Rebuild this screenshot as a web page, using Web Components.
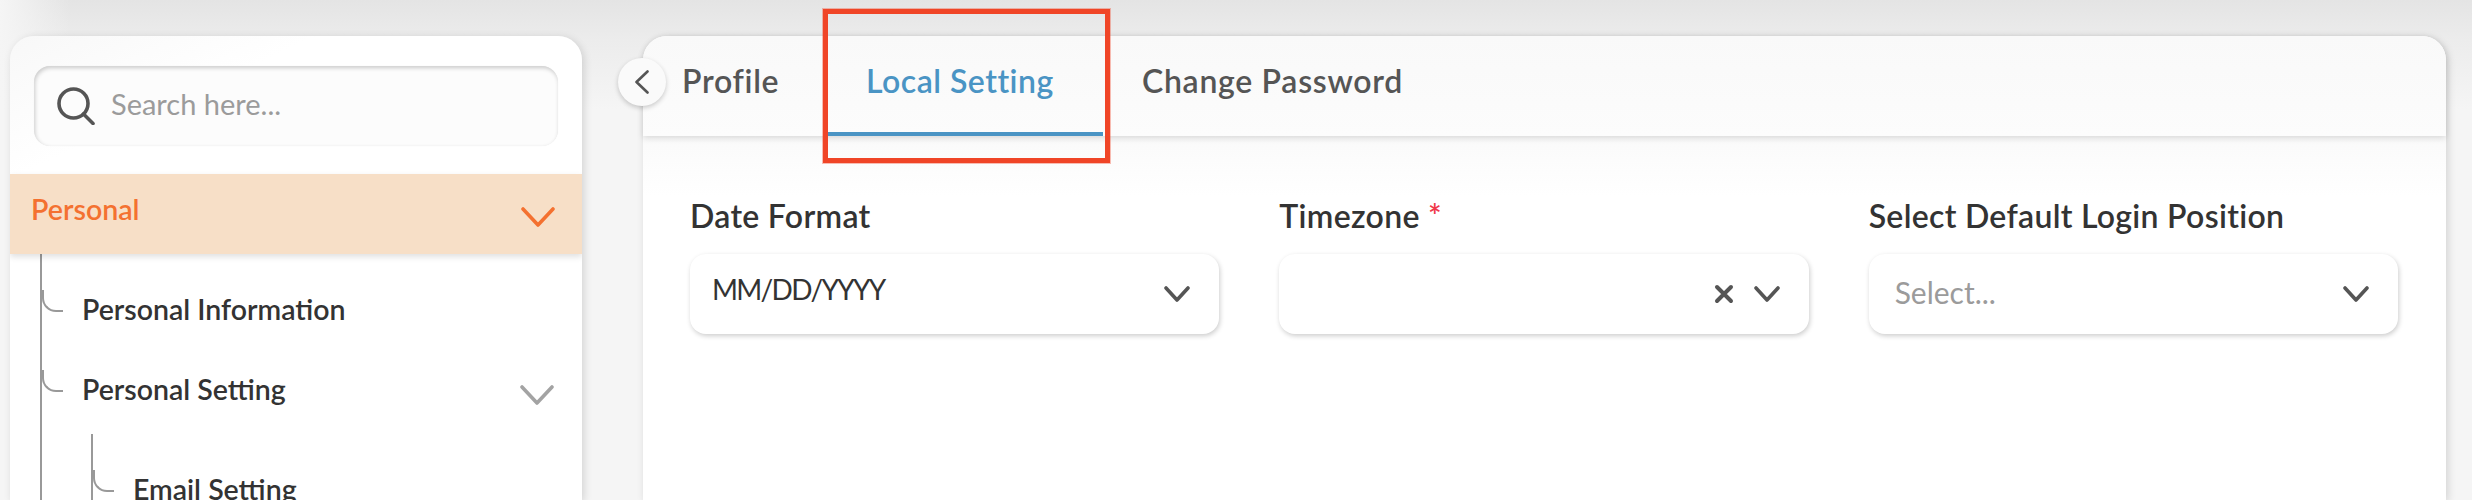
<!DOCTYPE html>
<html>
<head>
<meta charset="utf-8">
<title>Local Setting</title>
<style>
  html, body { margin: 0; height: 100%; overflow: hidden; }
  body {
    position: relative;
    background:
      linear-gradient(90deg, #f5f5f5 0, rgba(245, 245, 245, 0) 70px),
      linear-gradient(180deg, #e4e4e4 0, #ececec 40px, #f5f5f5 110px);
    font-family: Lato, "Open Sans", sans-serif;
    color: #333;
  }
  .layout { display: flex; gap: 61px; padding: 36px 26px 0 10px; height: 100%; box-sizing: border-box; overflow: hidden; }
</style>
</head>
<body>
<div class="layout">
  <side-nav>
    <search-box placeholder="Search here..."></search-box>
    <nav-group label="Personal"></nav-group>
    <nav-tree>
      <nav-leaf>Personal Information</nav-leaf>
      <nav-leaf chevron>Personal Setting</nav-leaf>
      <nav-tree nested>
        <nav-leaf>Email Setting</nav-leaf>
      </nav-tree>
    </nav-tree>
  </side-nav>
  <settings-panel>
    <tab-item slot="tabs">Profile</tab-item>
    <tab-item slot="tabs" active>Local Setting</tab-item>
    <tab-item slot="tabs">Change Password</tab-item>
    <select-field label="Date Format" value="MM/DD/YYYY"></select-field>
    <select-field label="Timezone" required clearable></select-field>
    <select-field label="Select Default Login Position" placeholder="Select..."></select-field>
  </settings-panel>
</div>
<mark-box></mark-box>

<script>
const CHEVRON = (color, w) => `<svg width="34" height="20" viewBox="0 0 34 20" fill="none"><path d="M2 2 L17 18 L32 2" stroke="${color}" stroke-width="${w}" stroke-linecap="round" stroke-linejoin="round"/></svg>`;

class SideNav extends HTMLElement {
  constructor() {
    super();
    this.attachShadow({ mode: "open" });
    this.shadowRoot.innerHTML = `
      <style>
        :host {
          display: block; width: 572px; flex: none; height: 464px; overflow: hidden;
          border-radius: 24px 24px 0 0;
          background: linear-gradient(155deg, #f8f8f8 0, #fff 130px);
          box-shadow: 2px 2px 8px rgba(0, 0, 0, .14);
        }
        .top { padding: 30px 24px 28px; }
      </style>
      <div class="top"><slot name="top"></slot></div>
      <slot></slot>
    `;
  }
  connectedCallback() {
    const search = this.querySelector("search-box");
    if (search) search.slot = "top";
  }
}

class SearchBox extends HTMLElement {
  constructor() {
    super();
    this.attachShadow({ mode: "open" });
    this.shadowRoot.innerHTML = `
      <style>
        :host {
          display: flex; align-items: center; gap: 16px; height: 80px; box-sizing: border-box;
          padding: 0 0 0 23px; border-radius: 16px;
          background: #fcfcfc;
          box-shadow: inset 1px 2px 4px rgba(0, 0, 0, .2), 0 0 1px rgba(0, 0, 0, .08);
        }
        svg { flex: none; }
        span { font-size: 29px; color: #9b9b9b; padding-bottom: 6px; }
      </style>
      <svg width="38" height="38" viewBox="0 0 38 38" fill="none">
        <circle cx="16.5" cy="16.5" r="14.5" stroke="#555" stroke-width="3.6"/>
        <path d="M26.5 27 L36 36.5" stroke="#555" stroke-width="3.6" stroke-linecap="round"/>
      </svg>
      <span></span>
    `;
  }
  connectedCallback() {
    this.shadowRoot.querySelector("span").textContent = this.getAttribute("placeholder");
  }
}

class NavGroup extends HTMLElement {
  constructor() {
    super();
    this.attachShadow({ mode: "open" });
    this.shadowRoot.innerHTML = `
      <style>
        :host {
          display: flex; align-items: center; justify-content: space-between;
          height: 80px; box-sizing: border-box; padding: 0 27px 0 21px;
          background: #f7dfc7; color: #f47130; font-size: 28.6px; font-weight: 600;
          box-shadow: 0 3px 6px rgba(0, 0, 0, .12); position: relative;
        }
        span { padding-bottom: 10px; }
        svg { display: block; margin-top: 6px; }
      </style>
      <span></span>${CHEVRON("#f47130", 3.6)}
    `;
  }
  connectedCallback() {
    this.shadowRoot.querySelector("span").textContent = this.getAttribute("label");
  }
}

class NavTree extends HTMLElement {
  constructor() {
    super();
    this.attachShadow({ mode: "open" });
    this.shadowRoot.innerHTML = `
      <style>
        :host { display: block; margin-left: 30px; padding-top: 18px; border-left: 2px solid #999; }
        :host([nested]) { margin-left: 49px; padding-top: 18px; margin-top: 2px; }
      </style>
      <slot></slot>
    `;
  }
}

class NavLeaf extends HTMLElement {
  constructor() {
    super();
    this.attachShadow({ mode: "open" });
    this.shadowRoot.innerHTML = `
      <style>
        :host {
          display: flex; align-items: center; height: 80px; padding-right: 28px;
          font-size: 28.5px; font-weight: 600; color: #333;
        }
        .elbow {
          flex: none; width: 21px; height: 22px; margin: -22px 19px 0 0;
          border-left: 2px solid #999; border-bottom: 2px solid #999;
          border-bottom-left-radius: 14px; box-sizing: border-box;
        }
        .text { flex: 1; padding-bottom: 6px; }
        svg { display: none; margin-top: 6px; }
        :host([chevron]) svg { display: block; }
      </style>
      <span class="elbow"></span>
      <span class="text"><slot></slot></span>
      ${CHEVRON("#a3a3a3", 3.6)}
    `;
  }
}

class SettingsPanel extends HTMLElement {
  constructor() {
    super();
    this.attachShadow({ mode: "open" });
    this.shadowRoot.innerHTML = `
      <style>
        :host {
          display: block; flex: 1; height: 464px; position: relative;
          border-radius: 24px 24px 0 0; background: #fff;
          box-shadow: 2px 2px 8px rgba(0, 0, 0, .14);
        }
        .tabs {
          display: grid; grid-template-columns: 185px 275px auto; justify-content: start;
          height: 100px; border-radius: 24px 24px 0 0;
          background: linear-gradient(180deg, #f9f9f9, #fcfcfc);
          box-shadow: 0 2px 6px rgba(0, 0, 0, .14); position: relative;
        }
        .back {
          position: absolute; left: -25px; top: 22px; width: 48px; height: 48px; border-radius: 50%;
          background: #fafafa; box-shadow: 0 2px 5px rgba(0, 0, 0, .2);
          display: flex; align-items: center; justify-content: center;
        }
        .form {
          display: grid; grid-template-columns: repeat(3, 1fr); column-gap: 60px;
          padding: 65px 48px 0 47px;
          background: linear-gradient(180deg, #fafafa, #fff 60px);
        }
      </style>
      <div class="tabs">
        <slot name="tabs"></slot>
        <div class="back">
          <svg width="16" height="24" viewBox="0 0 16 24" fill="none"><path d="M13.5 1.5 L2.5 12 L13.5 22.5" stroke="#555" stroke-width="2.6" stroke-linecap="round" stroke-linejoin="round"/></svg>
        </div>
      </div>
      <div class="form"><slot></slot></div>
    `;
  }
}

class TabItem extends HTMLElement {
  constructor() {
    super();
    this.attachShadow({ mode: "open" });
    this.shadowRoot.innerHTML = `
      <style>
        :host {
          display: flex; align-items: center; padding: 0 0 12px 39px; box-sizing: border-box;
          font-size: 32px; font-weight: 600; letter-spacing: .7px; color: #555; white-space: nowrap;
        }
        :host([active]) { color: #4a94c4; box-shadow: inset 0 -4px 0 #4a94c4; padding-left: 38px; letter-spacing: .5px; }
      </style>
      <slot></slot>
    `;
  }
}

class SelectField extends HTMLElement {
  constructor() {
    super();
    this.attachShadow({ mode: "open" });
    this.shadowRoot.innerHTML = `
      <style>
        :host { display: block; }
        label { display: block; height: 30px; line-height: 30px; margin-bottom: 23px; font-size: 32px; font-weight: 600; letter-spacing: .3px; color: #333; white-space: nowrap; }
        .req { color: #f0384a; display: none; }
        :host([required]) .req { display: inline; }
        .box {
          display: flex; align-items: center; height: 80px; box-sizing: border-box;
          padding: 0 29px 0 23px; border-radius: 16px; background: #fff;
          box-shadow: 1px 2px 5px rgba(0, 0, 0, .2);
        }
        .value { flex: 1; font-size: 28px; letter-spacing: -1.7px; color: #333; padding-bottom: 11px; margin-left: -1px; }
        :host([placeholder]) .value { font-size: 30px; letter-spacing: 0; color: #9b9b9b; padding: 0 0 4px 0; margin-left: 3px; }
        .clear { display: none; margin-right: 20px; }
        :host([clearable]) .clear { display: block; }
        svg { display: block; }
      </style>
      <label><span class="lbl"></span> <span class="req">*</span></label>
      <div class="box">
        <span class="value"></span>
        <svg class="clear" width="20" height="20" viewBox="0 0 20 20" fill="none"><path d="M3 3 L17 17 M17 3 L3 17" stroke="#555" stroke-width="4" stroke-linecap="round"/></svg>
        <svg width="26" height="16" viewBox="0 0 26 16" fill="none"><path d="M2 2 L13 14 L24 2" stroke="#555" stroke-width="3.6" stroke-linecap="round" stroke-linejoin="round"/></svg>
      </div>
    `;
  }
  connectedCallback() {
    const root = this.shadowRoot;
    root.querySelector(".lbl").textContent = this.getAttribute("label");
    root.querySelector(".value").textContent = this.getAttribute("value") || this.getAttribute("placeholder") || "";
  }
}

// the red annotation drawn over the screenshot
class MarkBox extends HTMLElement {
  constructor() {
    super();
    this.attachShadow({ mode: "open" });
    this.shadowRoot.innerHTML = `
      <style>
        :host {
          position: absolute; left: 823px; top: 9px; width: 287px; height: 154px; box-sizing: border-box;
          border: 5px solid #f04527; outline: 1px solid rgba(240, 69, 39, .35); pointer-events: none;
        }
      </style>
    `;
  }
}

customElements.define("side-nav", SideNav);
customElements.define("search-box", SearchBox);
customElements.define("nav-group", NavGroup);
customElements.define("nav-tree", NavTree);
customElements.define("nav-leaf", NavLeaf);
customElements.define("settings-panel", SettingsPanel);
customElements.define("tab-item", TabItem);
customElements.define("select-field", SelectField);
customElements.define("mark-box", MarkBox);
</script>
</body>
</html>
